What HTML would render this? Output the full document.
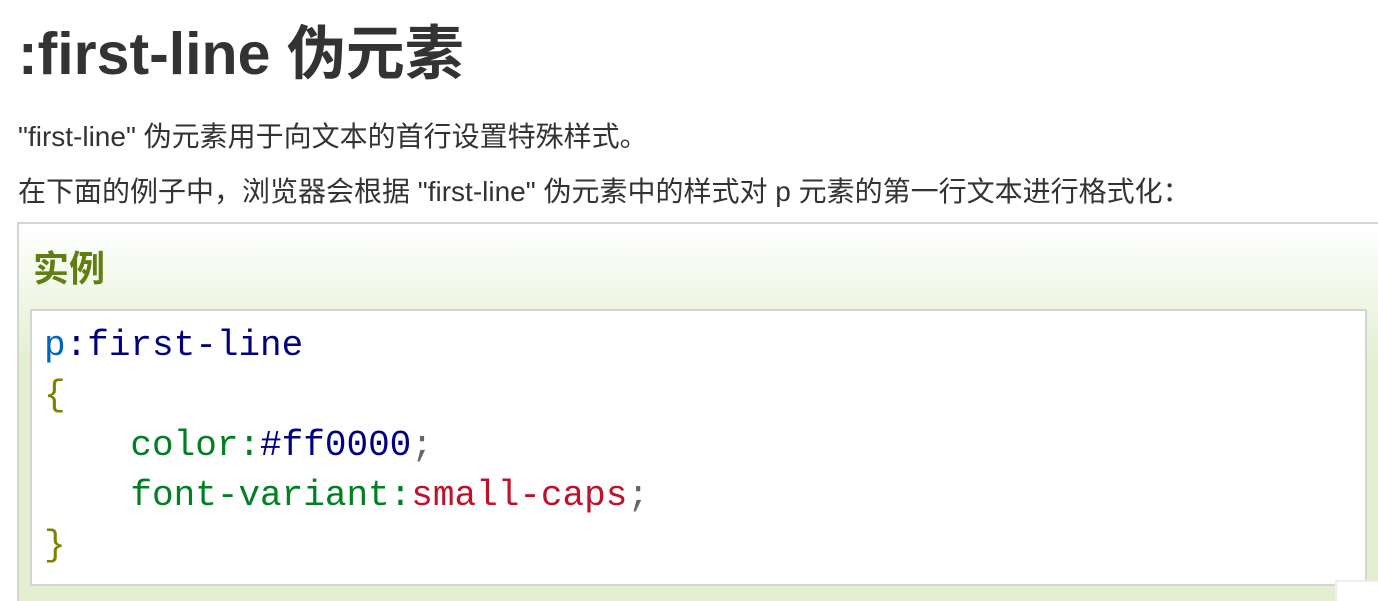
<!DOCTYPE html>
<html><head><meta charset="utf-8"><style>
html,body{margin:0;background:#fff;width:1378px;height:601px;overflow:hidden}
body{position:relative;font-family:"Liberation Sans","Noto Sans CJK SC",sans-serif;color:#333}
h1{position:absolute;left:18px;top:14px;margin:0;font-size:59px;font-weight:bold;line-height:80px}
.p{position:absolute;left:18px;font-size:28px;line-height:36px;margin:0;white-space:nowrap}
.ex{position:absolute;left:17px;top:222px;width:1380px;height:400px;border:2px solid #d4d4d4;box-sizing:border-box;background:linear-gradient(#fff 0,#e3efd0 140px,#e3efd0)}
.ex h2{position:absolute;left:14px;top:20px;margin:0;font-size:36px;color:#617f10;line-height:50px}
.code{position:absolute;left:30px;top:309px;width:1337px;height:277px;border:2px solid #d4d4d4;box-sizing:border-box;background:#fff;font-family:"Liberation Mono","DejaVu Sans Mono",monospace;font-size:36px;line-height:50px;padding:10px 0 0 12px;white-space:pre}
.sq{position:absolute;left:1335px;top:580px;width:50px;height:30px;background:#fff;border:2px solid #eee}
</style></head><body>
<h1>:first-line 伪元素</h1>
<p class="p" style="top:119px">"first-line" 伪元素用于向文本的首行设置特殊样式。</p>
<p class="p" style="top:174px">在下面的例子中，浏览器会根据 "first-line" 伪元素中的样式对 p 元素的第一行文本进行格式化：</p>
<div class="ex"><h2>实例</h2></div>
<div class="code"><span style="color:#0066bb">p</span><span style="color:#000080">:first-line</span>
<span style="color:#808000">{</span>
    <span style="color:#008020">color:</span><span style="color:#000080">#ff0000</span><span style="color:#666">;</span>
    <span style="color:#008020">font-variant:</span><span style="color:#c0102a">small-caps</span><span style="color:#666">;</span>
<span style="color:#808000">}</span></div>
<div class="sq"></div>
</body></html>
